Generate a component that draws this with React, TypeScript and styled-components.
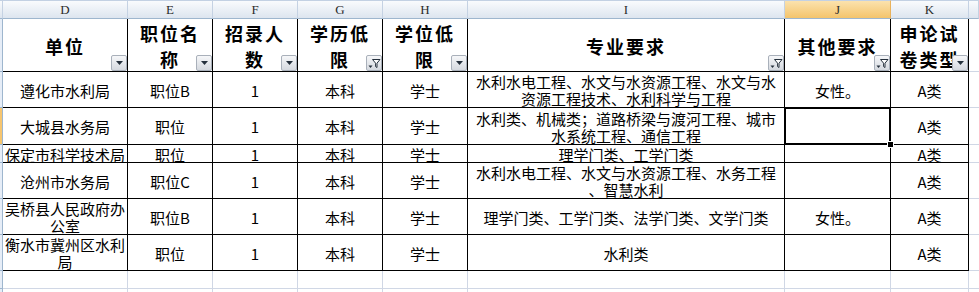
import React from "react";
import styled, { createGlobalStyle } from "styled-components";

const GlobalStyle = createGlobalStyle`
  html, body {
    margin: 0;
    padding: 0;
    background: #ffffff;
  }
  body {
    font-family: "Noto Sans CJK SC", "Liberation Sans", sans-serif;
    color: #000;
  }
`;

interface HeaderDef {
  letter: string;
  lines: string[];
  filtered: boolean;
}

interface RowData {
  height: number;
  unit: string[];
  post: string;
  major: string[];
  other: string;
}

// column widths in px (D..K), the strip on the left is the clipped row header
const widths = [125, 85, 85, 85, 85, 317, 106, 78];

const headers: HeaderDef[] = [
  { letter: "D", lines: ["单位"], filtered: false },
  { letter: "E", lines: ["职位名", "称"], filtered: false },
  { letter: "F", lines: ["招录人", "数"], filtered: false },
  { letter: "G", lines: ["学历低", "限"], filtered: true },
  { letter: "H", lines: ["学位低", "限"], filtered: false },
  { letter: "I", lines: ["专业要求"], filtered: true },
  { letter: "J", lines: ["其他要求"], filtered: true },
  { letter: "K", lines: ["申论试", "卷类型"], filtered: false },
];

const rows: RowData[] = [
  {
    height: 36,
    unit: ["遵化市水利局"],
    post: "职位B",
    major: ["水利水电工程、水文与水资源工程、水文与水", "资源工程技术、水利科学与工程"],
    other: "女性。",
  },
  {
    height: 37,
    unit: ["大城县水务局"],
    post: "职位",
    major: ["水利类、机械类；道路桥梁与渡河工程、城市", "水系统工程、通信工程"],
    other: "",
  },
  {
    height: 18,
    unit: ["保定市科学技术局"],
    post: "职位",
    major: ["理学门类、工学门类"],
    other: "",
  },
  {
    height: 36,
    unit: ["沧州市水务局"],
    post: "职位C",
    major: ["水利水电工程、水文与水资源工程、水务工程", "、智慧水利"],
    other: "",
  },
  {
    height: 36,
    unit: ["吴桥县人民政府办", "公室"],
    post: "职位B",
    major: ["理学门类、工学门类、法学门类、文学门类"],
    other: "女性。",
  },
  {
    height: 36,
    unit: ["衡水市冀州区水利", "局"],
    post: "职位",
    major: ["水利类"],
    other: "",
  },
];

const ACTIVE_COL = 6; // J
const ACTIVE_ROW = 1; // second data row

function Arrow() {
  return (
    <svg width="7" height="4" viewBox="0 0 7 4">
      <path d="M0 0h7L3.5 4z" fill="#25303c" />
    </svg>
  );
}

function Funnel() {
  return (
    <svg width="13" height="11" viewBox="0 0 13 11">
      <path
        d="M4.5 1.5h7.5L9 5.2v4.3L7.6 8.6V5.2z"
        fill="#ffffff"
        stroke="#25303c"
        strokeWidth="1"
        strokeLinejoin="round"
      />
      <path d="M0.5 7.5h4L2.5 10z" fill="#25303c" />
    </svg>
  );
}

export default function App() {
  const template = `3px ${widths.map((w) => `${w}px`).join(" ")} 1fr`;
  const rowTemplate = ["19px", "53px", ...rows.map((r) => `${r.height}px`), "18px", "18px"].join(" ");

  return (
    <>
      <GlobalStyle />
      <Sheet $cols={template} $rows={rowTemplate}>
        {/* column letters */}
        <ColLetter />
        {headers.map((h, i) => (
          <ColLetter key={h.letter} $active={i === ACTIVE_COL}>
            {h.letter}
          </ColLetter>
        ))}
        <ColLetter />

        {/* header row */}
        <RowHead />
        {headers.map((h) => (
          <HeadCell key={h.letter}>
            <HeadText>
              {h.lines.map((l) => (
                <span key={l}>{l}</span>
              ))}
            </HeadText>
            <FilterButton>{h.filtered ? <Funnel /> : <Arrow />}</FilterButton>
          </HeadCell>
        ))}
        <OutsideCell />

        {/* data rows */}
        {rows.map((r, ri) => {
          const values: string[][] = [
            r.unit,
            [r.post],
            ["1"],
            ["本科"],
            ["学士"],
            r.major,
            [r.other],
            ["A类"],
          ];
          return (
            <React.Fragment key={ri}>
              <RowHead $active={ri === ACTIVE_ROW} />
              {values.map((lines, ci) => {
                const selected = ri === ACTIVE_ROW && ci === ACTIVE_COL;
                return (
                  <Cell key={ci} $selected={selected}>
                    <CellText>
                      {lines.map((l, li) => (
                        <span key={li}>{l}</span>
                      ))}
                    </CellText>
                    {selected && (
                      <Selection>
                        <FillHandle />
                      </Selection>
                    )}
                  </Cell>
                );
              })}
              <OutsideCell />
            </React.Fragment>
          );
        })}

        {/* empty rows below the table */}
        {[0, 1].map((k) => (
          <React.Fragment key={`e${k}`}>
            <RowHead />
            {widths.map((_, ci) => (
              <EmptyCell key={ci} />
            ))}
            <OutsideCell />
          </React.Fragment>
        ))}
      </Sheet>
    </>
  );
}

const Sheet = styled.div<{ $cols: string; $rows: string }>`
  display: grid;
  grid-template-columns: ${(p) => p.$cols};
  grid-template-rows: ${(p) => p.$rows};
  width: 979px;
  height: 292px;
  overflow: hidden;
  background: #ffffff;
`;

const ColLetter = styled.div<{ $active?: boolean }>`
  box-sizing: border-box;
  display: flex;
  align-items: center;
  justify-content: center;
  font-family: "Liberation Serif", "DejaVu Serif", serif;
  font-size: 13px;
  color: #2b2b2b;
  background: ${(p) =>
    p.$active
      ? "linear-gradient(#fbe2ad, #f4c46c)"
      : "linear-gradient(#f9fbfd, #dde5ef)"};
  border-top: 1px solid #c3d1e3;
  border-right: 1px solid ${(p) => (p.$active ? "#e9b25c" : "#c5d2e3")};
  border-bottom: 1px solid #9eb6ce;
`;

const RowHead = styled.div<{ $active?: boolean }>`
  box-sizing: border-box;
  background: ${(p) => (p.$active ? "#f6c56f" : "#e6edf7")};
  border-right: 1px solid #9eb6ce;
  border-bottom: 1px solid #9eb6ce;
`;

const HeadCell = styled.div`
  position: relative;
  box-sizing: border-box;
  display: flex;
  align-items: center;
  justify-content: center;
  padding-top: 1px;
  background: #ffffff;
  border-right: 1px solid #000;
  border-bottom: 1px solid #000;
  overflow: hidden;
`;

const HeadText = styled.div`
  display: flex;
  flex-direction: column;
  align-items: center;
  font-size: 18px;
  font-weight: 700;
  letter-spacing: 2px;
  line-height: 26px;
  white-space: nowrap;
`;

const FilterButton = styled.span`
  position: absolute;
  right: 0;
  bottom: 0;
  width: 16px;
  height: 16px;
  box-sizing: border-box;
  display: flex;
  align-items: center;
  justify-content: center;
  border: 1px solid #a9b0ba;
  border-radius: 2px;
  background: linear-gradient(#f6f7f9, #d5d9df);
`;

const Cell = styled.div<{ $selected?: boolean }>`
  position: relative;
  box-sizing: border-box;
  display: flex;
  align-items: center;
  justify-content: center;
  padding-top: 1px;
  background: #ffffff;
  border-right: 1px solid #000;
  border-bottom: 1px solid #000;
  overflow: ${(p) => (p.$selected ? "visible" : "hidden")};
  z-index: ${(p) => (p.$selected ? 2 : "auto")};
`;

const CellText = styled.div`
  display: flex;
  flex-direction: column;
  align-items: center;
  font-size: 15px;
  line-height: 17px;
  white-space: nowrap;
`;

const Selection = styled.div`
  position: absolute;
  top: -1px;
  left: -1px;
  right: -1px;
  bottom: -1px;
  border: 2px solid #000;
  pointer-events: none;
`;

const FillHandle = styled.span`
  position: absolute;
  right: -5px;
  bottom: -5px;
  width: 7px;
  height: 7px;
  box-sizing: border-box;
  background: #000;
  border: 1px solid #ffffff;
`;

const EmptyCell = styled.div`
  box-sizing: border-box;
  background: #ffffff;
  border-right: 1px solid #d0d7e5;
  border-bottom: 1px solid #d0d7e5;
`;

const OutsideCell = styled.div`
  box-sizing: border-box;
  background: #ffffff;
  border-bottom: 1px solid #d0d7e5;
`;
